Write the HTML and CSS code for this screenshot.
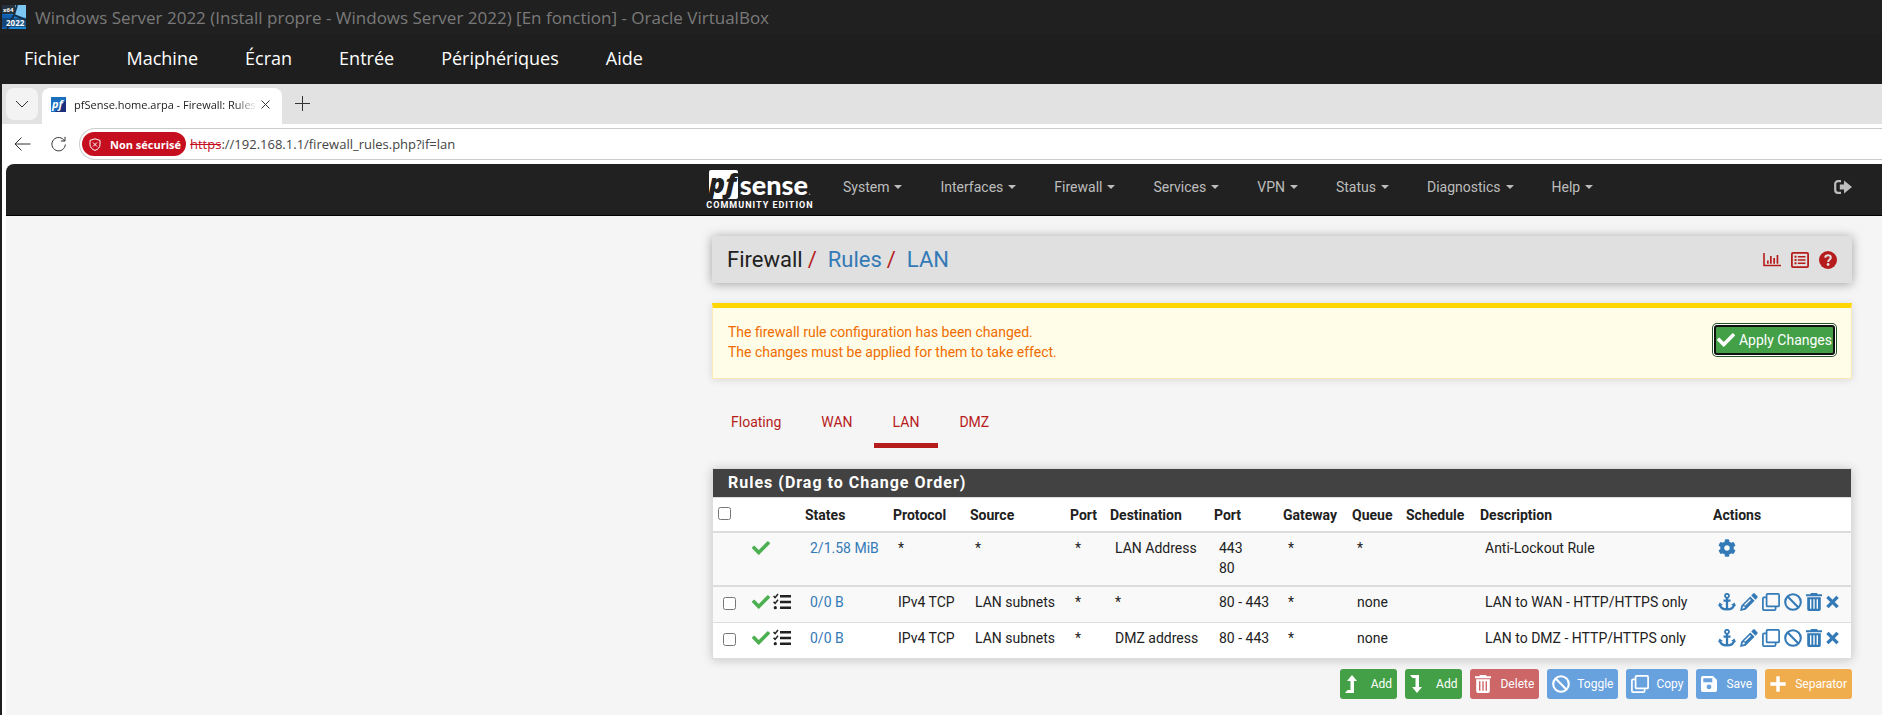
FILE: index.html
```html
<!DOCTYPE html>
<html lang="fr">
<head>
  <meta charset="UTF-8">
  <meta name="viewport" content="width=device-width, initial-scale=1.0">
  <title>pfSense.home.arpa - Firewall: Rules: LAN</title>
  <link rel="stylesheet" href="styles.css">
</head>
<body>
  <svg class="sprite" aria-hidden="true">
    <symbol id="check" viewBox="0 0 512 512"><path d="M173.898 439.404l-166.4-166.4c-9.997-9.997-9.997-26.206 0-36.204l36.203-36.204c9.997-9.998 26.207-9.998 36.204 0L192 312.69 432.095 72.596c9.997-9.997 26.207-9.997 36.204 0l36.203 36.204c9.997 9.997 9.997 26.206 0 36.204l-294.4 294.401c-9.998 9.997-26.207 9.997-36.204-.001z"/></symbol>
    <symbol id="tasks" viewBox="0 0 18 18"><path d="M7 2h11v2.6H7zM7 7.7h11v2.6H7zM7 13.4h11V16H7z"/><path d="M.6 3l1.5 1.6L5 1M.6 8.8l1.5 1.6L5 6.8" fill="none" stroke="currentColor" stroke-width="1.5"/><circle cx="2.3" cy="14.7" r="1.6"/></symbol>
    <symbol id="cog" viewBox="0 0 512 512"><path d="M487.4 315.7l-42.6-24.6c4.3-23.2 4.3-47 0-70.2l42.6-24.6c4.9-2.8 7.1-8.6 5.5-14-11.1-35.6-30-67.8-54.7-94.6-3.8-4.1-10-5.1-14.8-2.3L380.8 110c-17.9-15.4-38.5-27.3-60.8-35.1V25.8c0-5.6-3.9-10.5-9.4-11.7-36.7-8.2-74.3-7.8-109.2 0-5.5 1.2-9.4 6.1-9.4 11.7V75c-22.2 7.9-42.8 19.8-60.8 35.1L88.7 85.5c-4.9-2.8-11-1.9-14.8 2.3-24.7 26.7-43.6 58.9-54.7 94.6-1.7 5.4.6 11.2 5.5 14L67.3 221c-4.3 23.2-4.3 47 0 70.2l-42.6 24.6c-4.9 2.8-7.1 8.6-5.5 14 11.1 35.6 30 67.8 54.7 94.6 3.8 4.1 10 5.1 14.8 2.3l42.6-24.6c17.9 15.4 38.5 27.3 60.8 35.1v49.2c0 5.6 3.9 10.5 9.4 11.7 36.7 8.2 74.3 7.8 109.2 0 5.5-1.2 9.4-6.1 9.4-11.7v-49.2c22.2-7.9 42.8-19.8 60.8-35.1l42.6 24.6c4.9 2.8 11 1.9 14.8-2.3 24.7-26.7 43.6-58.9 54.7-94.6 1.5-5.5-.7-11.3-5.6-14.1zM256 336c-44.1 0-80-35.9-80-80s35.9-80 80-80 80 35.9 80 80-35.9 80-80 80z"/></symbol>
    <symbol id="anchor" viewBox="0 0 18 18"><g fill="none" stroke="currentColor"><circle cx="9" cy="2.8" r="2" stroke-width="1.8"/><path d="M9 5v11.5M5.5 7.6h7" stroke-width="2.3"/><path d="M1.8 11.8c.6 3 3.400 4.600 7.200 4.600s6.600-1.600 7.200-4.600" stroke-width="2.3"/></g><path d="M0 13l1.6-3.6L5 12zM18 13l-1.6-3.6L13 12z"/></symbol>
    <symbol id="pencil" viewBox="0 0 18 18"><path fill-rule="evenodd" d="M12.9.8c.6-.6 1.5-.6 2.1 0l2.2 2.2c.6.6.6 1.5 0 2.1l-1.7 1.7-4.3-4.3zM10.3 3.400l4.300 4.300-9 9L0 18l1.300-5.600zM3 13.300l-.7 2.400 2.400-.6v-1.600zM10 6l-5.800 5.800.9.9L10.900 7z"/></symbol>
    <symbol id="clone" viewBox="0 0 18 18"><g fill="none" stroke="currentColor" stroke-width="1.7"><rect x="4.600" y=".9" width="12.500" height="12.500" rx="1"/><path d="M4.500 4.400H2a1.100 1.100 0 0 0-1.100 1.100V16A1.100 1.100 0 0 0 2 17.100h10.500a1.100 1.100 0 0 0 1.100-1.100v-2.500"/></g></symbol>
    <symbol id="ban" viewBox="0 0 18 18"><g fill="none" stroke="currentColor" stroke-width="2.1"><circle cx="9" cy="9" r="7.800"/><path d="M3.600 3.600l10.800 10.800"/></g></symbol>
    <symbol id="trash" viewBox="0 0 16 18"><path fill-rule="evenodd" d="M5 0h6l.7 1.200H16v2H0v-2h4.300zM1.200 4.300h13.600V16.300a1.700 1.700 0 0 1-1.700 1.700H2.900a1.700 1.700 0 0 1-1.700-1.700zM4 6.300v9.400h1.400V6.300zM7.300 6.300v9.400h1.400V6.300zM10.600 6.300v9.400H12V6.300z"/></symbol>
    <symbol id="times" viewBox="0 0 13 18"><path d="M1.400 3.900l10.200 10.200M11.600 3.900L1.400 14.100" stroke="currentColor" stroke-width="3.400"/></symbol>
    <symbol id="turn-up" viewBox="0 0 12 18"><path d="M7 0l5 6H9v12H0l2.500-3H5.500V6H2z"/></symbol>
    <symbol id="turn-down" viewBox="0 0 12 18"><path d="M7 18l5-6H9V0H0l2.500 3H5.500v9H2z"/></symbol>
    <symbol id="save" viewBox="0 0 16 18"><path fill-rule="evenodd" d="M1.700 1H12l4 4v10.300a1.700 1.700 0 0 1-1.700 1.700H1.700A1.700 1.700 0 0 1 0 15.300V2.700A1.700 1.700 0 0 1 1.700 1zM2.300 3.300v4h9v-4zM8 9.500a2.400 2.400 0 1 0 0 4.800 2.400 2.400 0 0 0 0-4.800z"/></symbol>
    <symbol id="plus" viewBox="0 0 16 18"><path d="M6.300 1.300h3.400v6h6v3.400h-6v6H6.300v-6h-6V7.300h6z"/></symbol>
    <symbol id="sign-out" viewBox="0 0 18 18"><path d="M7 3.200H4A2.800 2.800 0 0 0 1.200 6v6A2.800 2.800 0 0 0 4 14.800h3" fill="none" stroke="currentColor" stroke-width="2.200"/><path d="M10 2.500v4H5.800v5H10v4l8-6.500z"/></symbol>
    <symbol id="chart" viewBox="0 0 18 18"><path d="M1 2v12.500h17" fill="none" stroke="currentColor" stroke-width="1.600"/><path d="M4 9.500h1.700v3.200H4zM7 5h1.700v7.700H7zM10.300 7h1.700v5.700h-1.700zM13.600 4h1.700v8.700h-1.700z"/></symbol>
    <symbol id="list" viewBox="0 0 18 18"><rect x=".9" y="1.900" width="16.200" height="14.200" rx="1" fill="none" stroke="currentColor" stroke-width="1.800"/><path d="M3.500 4.700h2v2h-2zM3.500 8h2v2h-2zM3.500 11.300h2v2h-2zM6.800 4.900h7.700v1.600H6.800zM6.800 8.200h7.700v1.600H6.800zM6.800 11.500h7.700v1.600H6.800z"/></symbol>
    <symbol id="help" viewBox="0 0 18 18"><circle cx="9" cy="9" r="9"/><path d="M6.200 6.700C6.400 5 7.500 4.300 9 4.300c1.600 0 2.800.9 2.800 2.400C11.800 8.500 9.200 8.600 9.200 10.900" fill="none" stroke="#e0e0e0" stroke-width="2"/><circle cx="9.100" cy="13.500" r="1.400" fill="#e0e0e0"/></symbol>
  </svg>

  <header class="vm">
    <div class="vm-title">
      <svg class="vm-icon" viewBox="0 0 24 24">
        <rect width="24" height="24" fill="#1f86d6"/>
        <path d="M12 0h12v13L13 10z" fill="#7cc8f3"/>
        <path d="M0 9l13 1-6 14H0z" fill="#0f5fae"/>
        <path d="M15 0l-3 10 12 5M12 10L5 24" fill="none" stroke="#15304d" stroke-width="2"/>
        <rect width="13" height="9" fill="#26323d"/>
        <rect y="13" width="24" height="9" fill="#16324f" opacity=".6"/>
        <text x="1" y="7" class="vm-icon-text small">x64</text>
        <text x="4" y="21" class="vm-icon-text">2022</text>
      </svg>
      <span>Windows Server 2022 (Install propre - Windows Server 2022) [En fonction] - Oracle VirtualBox</span>
    </div>
    <nav class="vm-menu">
      <button>Fichier</button>
      <button>Machine</button>
      <button>Écran</button>
      <button>Entrée</button>
      <button>Périphériques</button>
      <button>Aide</button>
    </nav>
  </header>

  <div class="browser">
    <div class="tab-strip">
      <button class="tab-list" aria-label="Onglets">
        <svg width="14" height="8" viewBox="0 0 14 8"><path d="M1 1l6 6 6-6"/></svg>
      </button>
      <div class="tab">
        <svg class="favicon" viewBox="0 0 15 15"><rect width="15" height="15" fill="#1a6fbf"/><path d="M15 3v12H4z" fill="#1b2f7d"/><text x="1" y="11">pf</text></svg>
        <span class="tab-title">pfSense.home.arpa - Firewall: Rules</span>
        <button class="tab-close" aria-label="Fermer">
          <svg width="9" height="9" viewBox="0 0 9 9"><path d="M.5.5l8 8M8.500.5l-8 8"/></svg>
        </button>
      </div>
      <button class="tab-new" aria-label="Nouvel onglet">
        <svg width="15" height="15" viewBox="0 0 15 15"><path d="M7.500 0v15M0 7.500h15"/></svg>
      </button>
    </div>
    <div class="toolbar">
      <button aria-label="Retour"><svg width="17" height="14" viewBox="0 0 17 14"><path d="M16.500 7H1M7.500.5L1 7l6.500 6.500"/></svg></button>
      <button aria-label="Actualiser"><svg width="15" height="16" viewBox="0 0 15 16"><path d="M13.500 5A6.700 6.700 0 1 0 14.300 8.500M14 .8V5H9.800"/></svg></button>
      <div class="address">
        <button class="insecure">
          <svg width="12" height="13" viewBox="0 0 12 13"><path d="M6 .8l5 1.600v4c0 3-2 5-5 6-3-1-5-3-5-6v-4zM4 4.500l4 4M8 4.500l-4 4"/></svg>
          Non sécurisé
        </button>
        <label class="scheme" for="url">https</label>
        <input id="url" type="text" value="://192.168.1.1/firewall_rules.php?if=lan">
      </div>
    </div>

    <div class="page">
      <div class="navbar">
        <div class="container">
          <a class="brand" href="#">
            <span class="brand-logo"><span class="brand-pf">pf</span><span class="brand-sense">sense</span><span class="brand-dot">.</span></span>
            <span class="brand-edition">COMMUNITY EDITION</span>
          </a>
          <nav class="nav">
            <a href="#">System</a>
            <a href="#">Interfaces</a>
            <a href="#">Firewall</a>
            <a href="#">Services</a>
            <a href="#">VPN</a>
            <a href="#">Status</a>
            <a href="#">Diagnostics</a>
            <a href="#">Help</a>
          </nav>
          <a class="logout" href="#" aria-label="Logout"><svg class="icon"><use href="#sign-out"/></svg></a>
        </div>
      </div>

      <main class="container content">
        <div class="page-header">
          <ol class="breadcrumb">
            <li>Firewall</li>
            <li><a href="#">Rules</a></li>
            <li><a href="#">LAN</a></li>
          </ol>
          <div class="context-links">
            <a href="#" aria-label="Status"><svg class="icon"><use href="#chart"/></svg></a>
            <a href="#" aria-label="Logs"><svg class="icon"><use href="#list"/></svg></a>
            <a href="#" aria-label="Help"><svg class="icon"><use href="#help"/></svg></a>
          </div>
        </div>

        <div class="alert">
          <p>The firewall rule configuration has been changed.<br>The changes must be applied for them to take effect.</p>
          <button class="apply"><svg class="icon"><use href="#check"/></svg>Apply Changes</button>
        </div>

        <nav class="pills">
          <a href="#">Floating</a>
          <a href="#">WAN</a>
          <a class="active" href="#">LAN</a>
          <a href="#">DMZ</a>
        </nav>

        <section class="panel">
          <h2>Rules (Drag to Change Order)</h2>
          <table class="rules">
            <colgroup>
              <col class="col-select"><col class="col-icons"><col class="col-states"><col class="col-protocol">
              <col class="col-source"><col class="col-port"><col class="col-destination"><col class="col-dport">
              <col class="col-gateway"><col class="col-queue"><col class="col-schedule"><col><col class="col-actions">
            </colgroup>
            <thead>
              <tr>
                <th><input type="checkbox" aria-label="Select all"></th>
                <th></th>
                <th>States</th>
                <th>Protocol</th>
                <th>Source</th>
                <th>Port</th>
                <th>Destination</th>
                <th>Port</th>
                <th>Gateway</th>
                <th>Queue</th>
                <th>Schedule</th>
                <th>Description</th>
                <th>Actions</th>
              </tr>
            </thead>
            <tbody>
              <tr class="lockout">
                <td></td>
                <td><div class="icons pass"><svg class="icon"><use href="#check"/></svg></div></td>
                <td><a href="#">2/1.58 MiB</a></td>
                <td>*</td>
                <td>*</td>
                <td>*</td>
                <td>LAN Address</td>
                <td>443<br>80</td>
                <td>*</td>
                <td>*</td>
                <td></td>
                <td>Anti-Lockout Rule</td>
                <td><div class="icons"><a href="#" aria-label="Settings"><svg class="icon"><use href="#cog"/></svg></a></div></td>
              </tr>
            </tbody>
            <tbody>
              <tr>
                <td><input type="checkbox" aria-label="Select rule"></td>
                <td><div class="icons pass"><svg class="icon"><use href="#check"/></svg><svg class="icon dark"><use href="#tasks"/></svg></div></td>
                <td><a href="#">0/0 B</a></td>
                <td>IPv4 TCP</td>
                <td>LAN subnets</td>
                <td>*</td>
                <td>*</td>
                <td>80 - 443</td>
                <td>*</td>
                <td>none</td>
                <td></td>
                <td>LAN to WAN - HTTP/HTTPS only</td>
                <td>
                  <div class="icons">
                    <a href="#" aria-label="Move"><svg class="icon"><use href="#anchor"/></svg></a>
                    <a href="#" aria-label="Edit"><svg class="icon"><use href="#pencil"/></svg></a>
                    <a href="#" aria-label="Copy"><svg class="icon"><use href="#clone"/></svg></a>
                    <a href="#" aria-label="Disable"><svg class="icon"><use href="#ban"/></svg></a>
                    <a href="#" aria-label="Delete"><svg class="icon medium"><use href="#trash"/></svg></a>
                    <a href="#" aria-label="Reset states"><svg class="icon narrow"><use href="#times"/></svg></a>
                  </div>
                </td>
              </tr>
              <tr>
                <td><input type="checkbox" aria-label="Select rule"></td>
                <td><div class="icons pass"><svg class="icon"><use href="#check"/></svg><svg class="icon dark"><use href="#tasks"/></svg></div></td>
                <td><a href="#">0/0 B</a></td>
                <td>IPv4 TCP</td>
                <td>LAN subnets</td>
                <td>*</td>
                <td>DMZ address</td>
                <td>80 - 443</td>
                <td>*</td>
                <td>none</td>
                <td></td>
                <td>LAN to DMZ - HTTP/HTTPS only</td>
                <td>
                  <div class="icons">
                    <a href="#" aria-label="Move"><svg class="icon"><use href="#anchor"/></svg></a>
                    <a href="#" aria-label="Edit"><svg class="icon"><use href="#pencil"/></svg></a>
                    <a href="#" aria-label="Copy"><svg class="icon"><use href="#clone"/></svg></a>
                    <a href="#" aria-label="Disable"><svg class="icon"><use href="#ban"/></svg></a>
                    <a href="#" aria-label="Delete"><svg class="icon medium"><use href="#trash"/></svg></a>
                    <a href="#" aria-label="Reset states"><svg class="icon narrow"><use href="#times"/></svg></a>
                  </div>
                </td>
              </tr>
            </tbody>
          </table>
        </section>

        <div class="action-buttons">
          <button class="btn btn-success"><svg class="icon arrow"><use href="#turn-up"/></svg>Add</button>
          <button class="btn btn-success"><svg class="icon arrow"><use href="#turn-down"/></svg>Add</button>
          <button class="btn btn-danger"><svg class="icon medium"><use href="#trash"/></svg>Delete</button>
          <button class="btn btn-primary btn-tight"><svg class="icon"><use href="#ban"/></svg>Toggle</button>
          <button class="btn btn-primary btn-tight"><svg class="icon"><use href="#clone"/></svg>Copy</button>
          <button class="btn btn-primary"><svg class="icon medium"><use href="#save"/></svg>Save</button>
          <button class="btn btn-warning"><svg class="icon medium"><use href="#plus"/></svg>Separator</button>
        </div>
      </main>
    </div>
  </div>
</body>
</html>
```
FILE: styles.css
```css
* {
  box-sizing: border-box;
}

body {
  margin: 0;
  min-height: 100vh;
  display: flex;
  flex-direction: column;
  background: #1e1e1e;
  font-family: "Open Sans", "Noto Sans", sans-serif;
}

button {
  margin: 0;
  padding: 0;
  border: 0;
  background: none;
  color: inherit;
  font: inherit;
}

a {
  color: #337ab7;
  text-decoration: none;
}

.sprite {
  display: none;
}

.icon {
  display: block;
  flex: none;
  width: 18px;
  height: 18px;
  fill: currentColor;
}

.icon.medium {
  width: 16px;
}

.icon.narrow {
  width: 13px;
}

.icon.arrow {
  width: 12px;
}

/* VirtualBox window */
.vm-title {
  display: flex;
  align-items: center;
  gap: 9px;
  height: 34px;
  padding-left: 2px;
  background: #202020;
  color: #7a7a7a;
  font-size: 17px;
  white-space: nowrap;
}

.vm-icon {
  width: 24px;
  height: 24px;
}

.vm-icon-text {
  fill: #fff;
  font-size: 8px;
  font-weight: 700;
}

.vm-icon-text.small {
  font-size: 6px;
}

.vm-menu {
  display: flex;
  gap: 47px;
  height: 50px;
  padding: 0 24px 2px;
  align-items: center;
  color: #fff;
  font-size: 18px;
}

/* Browser chrome */
.browser {
  flex: 1;
  display: flex;
  flex-direction: column;
  margin-left: 2px;
  background: #fff;
}

.browser button svg {
  display: block;
}

.tab-strip {
  display: flex;
  height: 40px;
  padding: 4px 4px 0;
  background: #e2e2e2;
}

.tab-strip svg:not(.favicon),
.toolbar svg {
  fill: none;
  stroke: #333;
}

.tab-list {
  display: grid;
  place-items: center;
  width: 32px;
  height: 32px;
  margin-right: 4px;
  border-radius: 8px;
  background: #f3f3f3;
}

.tab {
  display: flex;
  align-items: center;
  width: 240px;
  padding: 0 12px 4px 9px;
  border-radius: 8px 8px 0 0;
  background: #fff;
}

.favicon {
  width: 15px;
  height: 15px;
  margin-right: 8px;
}

.favicon text {
  fill: #fff;
  font: italic 700 11px "Open Sans", sans-serif;
}

.tab-title {
  flex: 1;
  overflow: hidden;
  margin-right: 4px;
  color: #222;
  font-size: 11px;
  white-space: nowrap;
  mask-image: linear-gradient(90deg, #000 88%, transparent);
}

.tab-new {
  align-self: flex-start;
  margin: 8px 13px;
}

.toolbar {
  display: flex;
  align-items: center;
  gap: 20px;
  height: 40px;
  padding-left: 12px;
}

.address {
  flex: 1;
  display: flex;
  align-items: center;
  height: 32px;
  margin-left: -7px;
  padding-left: 2px;
  border: 1px solid #ccc;
  border-right: 0;
  border-radius: 16px 0 0 16px;
  font-size: 13px;
}

.toolbar .insecure {
  display: flex;
  align-items: center;
  gap: 9px;
  height: 24px;
  margin-right: 4px;
  padding: 0 5px 0 7px;
  border-radius: 12px;
  background: #c50f1f;
  color: #fff;
  font-size: 11px;
  font-weight: 700;
}

.toolbar .insecure svg {
  stroke: #fff;
}

.scheme {
  color: #c50f1f;
  text-decoration: line-through;
}

.address input {
  flex: 1;
  min-width: 0;
  padding: 0;
  border: 0;
  outline: 0;
  color: #444;
  font: inherit;
}

/* pfSense page */
.page {
  flex: 1;
  margin-left: 4px;
  border-radius: 8px 0 0 0;
  overflow: hidden;
  background: #f5f5f5;
  color: #212121;
  font: 14px/20px Roboto, sans-serif;
}

.container {
  max-width: 1170px;
  margin: 0 15px 0 auto;
  padding: 0 15px;
}

.navbar {
  background: #212121;
  border-bottom: 1px solid #000;
}

.navbar .container {
  display: flex;
  height: 51px;
}

.brand {
  display: flex;
  flex-direction: column;
  align-items: center;
  width: 106px;
  margin-left: -5px;
  padding-top: 6px;
  color: #fff;
}

.brand-logo {
  display: flex;
  height: 29px;
}

.brand-pf {
  width: 29px;
  border-radius: 2px;
  background: #fff;
  color: #212121;
  font: italic 800 27px/26px "Open Sans", sans-serif;
}

.brand-sense {
  margin-left: 2px;
  font: 900 27px/30px "Lato", sans-serif;
}

.brand-dot {
  color: #999;
  font-size: 12px;
  line-height: 42px;
}

.brand-edition {
  font-size: 9px;
  font-weight: 700;
  line-height: 12px;
  letter-spacing: 1px;
  white-space: nowrap;
}

.nav {
  flex: 1;
  display: flex;
  margin-left: 11px;
}

.nav a {
  display: flex;
  align-items: center;
  gap: 5px;
  height: 46px;
  padding: 0 19px;
  color: #bdbdbd;
}

.nav a::after {
  content: "";
  border: 4px solid transparent;
  border-top-color: currentColor;
  border-bottom: 0;
}

.logout {
  margin-top: 14px;
  color: #bdbdbd;
}

.content {
  padding-top: 20px;
}

.page-header {
  display: flex;
  align-items: center;
  justify-content: space-between;
  height: 47px;
  padding: 0 15px;
  background: #e0e0e0;
  box-shadow: 0 1px 10px rgba(0, 0, 0, 0.35);
}

.breadcrumb {
  display: flex;
  margin: 0;
  padding: 0;
  list-style: none;
  font-size: 22px;
}

.breadcrumb li + li::before {
  content: "/";
  margin: 0 11px 0 5px;
  color: #b71c1c;
}

.context-links {
  display: flex;
  gap: 10px;
}

.context-links a {
  color: #b71c1c;
}

.alert {
  display: flex;
  justify-content: space-between;
  height: 76px;
  margin-top: 20px;
  padding: 14px 16px 0 15px;
  border: 1px solid #fae9b5;
  border-top: 5px solid #ffd600;
  background: #fffde7;
  box-shadow: 0 1px 8px rgba(0, 0, 0, 0.12);
  color: #ef6c00;
}

.alert p {
  margin: 0;
}

.apply {
  display: flex;
  align-items: center;
  gap: 4px;
  height: 30px;
  margin-top: 3px;
  padding: 0 1px;
  border: 2px solid #101010;
  border-radius: 3px;
  background: #43a047;
  box-shadow: 0 0 0 1px #fff, 0 0 0 2px #24502a;
  color: #fff;
}

.pills {
  display: flex;
  gap: 2px;
  margin-top: 25px;
}

.pills a {
  padding: 8px 19px 11px;
  border-bottom: 5px solid transparent;
  color: #b71c1c;
}

.pills a.active {
  border-color: #b71c1c;
}

.panel {
  margin-top: 20px;
  border: 1px solid #ddd;
  background: #fff;
  box-shadow: 0 1px 10px rgba(0, 0, 0, 0.2);
}

.panel h2 {
  margin: 0;
  padding: 4px 15px;
  background: #424242;
  color: #fff;
  font-size: 16px;
  font-weight: 700;
  letter-spacing: 1px;
}

.rules {
  width: 100%;
  table-layout: fixed;
  border-spacing: 0;
}

.col-select { width: 29px; }
.col-icons { width: 58px; }
.col-states { width: 88px; }
.col-protocol { width: 77px; }
.col-source { width: 100px; }
.col-port { width: 40px; }
.col-destination { width: 104px; }
.col-dport { width: 69px; }
.col-gateway { width: 69px; }
.col-queue { width: 54px; }
.col-schedule { width: 74px; }
.col-actions { width: 143px; }

.rules th {
  padding: 7px 5px 6px;
  border-top: 1px solid #ddd;
  font-weight: 700;
  text-align: left;
}

.rules td {
  padding: 5px 0 10px 10px;
  border-top: 1px solid #ddd;
  vertical-align: top;
}

.rules tbody tr:first-child td {
  border-top-width: 2px;
}

.rules .lockout td {
  padding-bottom: 7px;
}

.rules tbody tr:first-child {
  background: #f9f9f9;
}

.rules input {
  display: block;
  width: 13px;
  height: 13px;
  margin: 0;
}

.rules th input {
  margin-bottom: 3px;
}

.rules td input {
  margin-top: 5px;
}

.icons {
  display: flex;
  align-items: center;
  gap: 4px;
  height: 20px;
}

.pass {
  gap: 3px;
  color: #4caf50;
}

.dark {
  color: #212121;
}

.action-buttons {
  display: flex;
  justify-content: flex-end;
  gap: 8px;
  margin-top: 10px;
}

.btn {
  display: flex;
  align-items: center;
  gap: 9px;
  height: 30px;
  padding: 0 5px;
  border-radius: 3px;
  color: #fff;
  font-size: 12px;
}

.btn-tight {
  gap: 7px;
}

.btn-success {
  gap: 14px;
  background: #43a047;
}

.btn-danger {
  background: #cd6767;
}

.btn-primary {
  background: #67a1de;
}

.btn-warning {
  background: #f0ad4e;
}
```
